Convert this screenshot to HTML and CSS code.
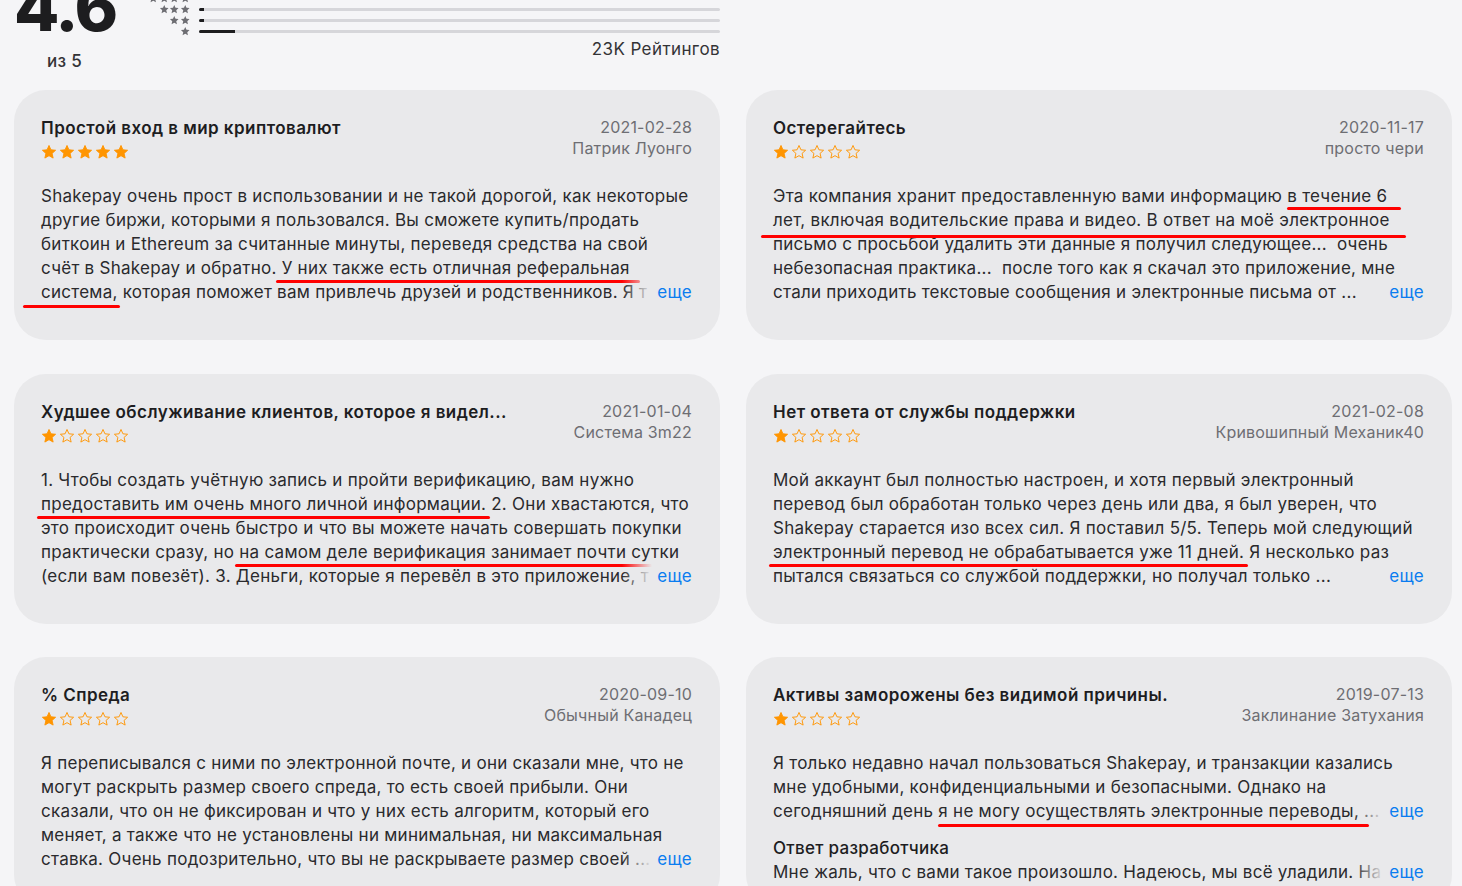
FILE: index.html
```html
<!DOCTYPE html>
<html lang="ru">
<head>
    <meta charset="UTF-8">
    <title>Оценки и отзывы</title>
    <link rel="stylesheet" href="styles.css">
</head>
<body>
    <svg class="defs" width="0" height="0">
        <symbol id="star" viewBox="0 0 24 24">
            <polygon points="12,2.2 14.9,8.7 21.9,9.4 16.6,14.1 18.2,21.1 12,17.5 5.8,21.1 7.4,14.1 2.1,9.4 9.1,8.7"/>
        </symbol>
    </svg>

    <div class="page">
        <!-- сводка оценок -->
        <div class="summary">
            <div class="score">
                <div class="score-value">4.6</div>
                <div class="score-max">из 5</div>
            </div>
            <div class="hist">
                <div class="hist-row">
                    <span class="hist-stars"><svg><use href="#star"/></svg><svg><use href="#star"/></svg><svg><use href="#star"/></svg><svg><use href="#star"/></svg><svg><use href="#star"/></svg></span>
                    <span class="bar"><span class="fill" style="width:87%"></span></span>
                </div>
                <div class="hist-row">
                    <span class="hist-stars"><svg><use href="#star"/></svg><svg><use href="#star"/></svg><svg><use href="#star"/></svg><svg><use href="#star"/></svg></span>
                    <span class="bar"><span class="fill" style="width:4%"></span></span>
                </div>
                <div class="hist-row">
                    <span class="hist-stars"><svg><use href="#star"/></svg><svg><use href="#star"/></svg><svg><use href="#star"/></svg></span>
                    <span class="bar"><span class="fill" style="width:1%"></span></span>
                </div>
                <div class="hist-row">
                    <span class="hist-stars"><svg><use href="#star"/></svg><svg><use href="#star"/></svg></span>
                    <span class="bar"><span class="fill" style="width:1%"></span></span>
                </div>
                <div class="hist-row">
                    <span class="hist-stars"><svg><use href="#star"/></svg></span>
                    <span class="bar"><span class="fill" style="width:7%"></span></span>
                </div>
                <div class="hist-count">23K Рейтингов</div>
            </div>
        </div>

        <!-- отзывы -->
        <div class="reviews">
            <div class="review">
                <div class="review-head">
                    <div>
                        <h3 class="review-title">Простой вход в мир криптовалют</h3>
                        <div class="stars">
                            <svg class="star on"><use href="#star"/></svg><svg class="star on"><use href="#star"/></svg><svg class="star on"><use href="#star"/></svg><svg class="star on"><use href="#star"/></svg><svg class="star on"><use href="#star"/></svg>
                        </div>
                    </div>
                    <div class="review-meta">
                        <div>2021-02-28</div>
                        <div>Патрик Луонго</div>
                    </div>
                </div>
                <div class="review-body">
                    <div class="line">Shakepay очень прост в использовании и не такой дорогой, как некоторые</div>
                    <div class="line">другие биржи, которыми я пользовался. Вы сможете купить/продать</div>
                    <div class="line">биткоин и Ethereum за считанные минуты, переведя средства на свой</div>
                    <div class="line">счёт в Shakepay и обратно. <span class="mark m-ref">У них также есть отличная реферальная</span></div>
                    <div class="line last"><span class="mark m-sys">система,</span> которая поможет вам привлечь друзей и родственников. Я т</div>
                    <a class="more" href="#">еще</a>
                </div>
            </div>

            <div class="review">
                <div class="review-head">
                    <div>
                        <h3 class="review-title">Остерегайтесь</h3>
                        <div class="stars">
                            <svg class="star on"><use href="#star"/></svg><svg class="star"><use href="#star"/></svg><svg class="star"><use href="#star"/></svg><svg class="star"><use href="#star"/></svg><svg class="star"><use href="#star"/></svg>
                        </div>
                    </div>
                    <div class="review-meta">
                        <div>2020-11-17</div>
                        <div>просто чери</div>
                    </div>
                </div>
                <div class="review-body">
                    <div class="line">Эта компания хранит предоставленную вами информацию <span class="mark m-six">в течение 6</span></div>
                    <div class="line"><span class="mark m-full">лет, включая водительские права и видео. В ответ на моё электронное</span></div>
                    <div class="line">письмо с просьбой удалить эти данные я получил следующее...&nbsp; очень</div>
                    <div class="line">небезопасная практика...&nbsp; после того как я скачал это приложение, мне</div>
                    <div class="line last">стали приходить текстовые сообщения и электронные письма от ...</div>
                    <a class="more" href="#">еще</a>
                </div>
            </div>

            <div class="review">
                <div class="review-head">
                    <div>
                        <h3 class="review-title">Худшее обслуживание клиентов, которое я видел...</h3>
                        <div class="stars">
                            <svg class="star on"><use href="#star"/></svg><svg class="star"><use href="#star"/></svg><svg class="star"><use href="#star"/></svg><svg class="star"><use href="#star"/></svg><svg class="star"><use href="#star"/></svg>
                        </div>
                    </div>
                    <div class="review-meta">
                        <div>2021-01-04</div>
                        <div>Система 3m22</div>
                    </div>
                </div>
                <div class="review-body">
                    <div class="line">1. Чтобы создать учётную запись и пройти верификацию, вам нужно</div>
                    <div class="line"><span class="mark">предоставить им очень много личной информации.</span> 2. Они хвастаются, что</div>
                    <div class="line">это происходит очень быстро и что вы можете начать совершать покупки</div>
                    <div class="line">практически сразу, но <span class="mark">на самом деле верификация занимает почти сутки</span></div>
                    <div class="line last">(если вам повезёт). 3. Деньги, которые я перевёл в это приложение, т</div>
                    <a class="more" href="#">еще</a>
                </div>
            </div>

            <div class="review">
                <div class="review-head">
                    <div>
                        <h3 class="review-title">Нет ответа от службы поддержки</h3>
                        <div class="stars">
                            <svg class="star on"><use href="#star"/></svg><svg class="star"><use href="#star"/></svg><svg class="star"><use href="#star"/></svg><svg class="star"><use href="#star"/></svg><svg class="star"><use href="#star"/></svg>
                        </div>
                    </div>
                    <div class="review-meta">
                        <div>2021-02-08</div>
                        <div>Кривошипный Механик40</div>
                    </div>
                </div>
                <div class="review-body">
                    <div class="line">Мой аккаунт был полностью настроен, и хотя первый электронный</div>
                    <div class="line">перевод был обработан только через день или два, я был уверен, что</div>
                    <div class="line">Shakepay старается изо всех сил. Я поставил 5/5. Теперь мой следующий</div>
                    <div class="line"><span class="mark">электронный перевод не обрабатывается уже 11 дней.</span> Я несколько раз</div>
                    <div class="line last">пытался связаться со службой поддержки, но получал только ...</div>
                    <a class="more" href="#">еще</a>
                </div>
            </div>

            <div class="review">
                <div class="review-head">
                    <div>
                        <h3 class="review-title">% Спреда</h3>
                        <div class="stars">
                            <svg class="star on"><use href="#star"/></svg><svg class="star"><use href="#star"/></svg><svg class="star"><use href="#star"/></svg><svg class="star"><use href="#star"/></svg><svg class="star"><use href="#star"/></svg>
                        </div>
                    </div>
                    <div class="review-meta">
                        <div>2020-09-10</div>
                        <div>Обычный Канадец</div>
                    </div>
                </div>
                <div class="review-body">
                    <div class="line">Я переписывался с ними по электронной почте, и они сказали мне, что не</div>
                    <div class="line">могут раскрыть размер своего спреда, то есть своей прибыли. Они</div>
                    <div class="line">сказали, что он не фиксирован и что у них есть алгоритм, который его</div>
                    <div class="line">меняет, а также что не установлены ни минимальная, ни максимальная</div>
                    <div class="line last">ставка. Очень подозрительно, что вы не раскрываете размер своей ...</div>
                    <a class="more" href="#">еще</a>
                </div>
            </div>

            <div class="review">
                <div class="review-head">
                    <div>
                        <h3 class="review-title">Активы заморожены без видимой причины.</h3>
                        <div class="stars">
                            <svg class="star on"><use href="#star"/></svg><svg class="star"><use href="#star"/></svg><svg class="star"><use href="#star"/></svg><svg class="star"><use href="#star"/></svg><svg class="star"><use href="#star"/></svg>
                        </div>
                    </div>
                    <div class="review-meta">
                        <div>2019-07-13</div>
                        <div>Заклинание Затухания</div>
                    </div>
                </div>
                <div class="review-body">
                    <div class="line">Я только недавно начал пользоваться Shakepay, и транзакции казались</div>
                    <div class="line">мне удобными, конфиденциальными и безопасными. Однако на</div>
                    <div class="line last">сегодняшний день <span class="mark m-end">я не могу осуществлять электронные переводы,</span> ...</div>
                    <a class="more" href="#">еще</a>
                </div>
                <div class="dev-reply">
                    <div class="dev-title">Ответ разработчика</div>
                    <div class="review-body">
                        <div class="line last">Мне жаль, что с вами такое произошло. Надеюсь, мы всё уладили. На</div>
                        <a class="more" href="#">еще</a>
                    </div>
                </div>
            </div>
        </div>
    </div>
</body>
</html>
```

FILE: styles.css
```css
body {
    margin: 0;
    background-color: #f5f5f7;
    font-family: Inter, "Noto Sans", sans-serif;
    color: #1d1d1f;
    overflow: hidden;
}
.defs {
    position: absolute;
    width: 0;
    height: 0;
}
.page {
    padding: 0 10px 0 14px;
    margin-top: -18px;
}

/* сводка */
.summary {
    display: flex;
    width: 706px;
    height: 108px;
}
.score {
    width: 101px;
    text-align: center;
}
.score-value {
    font-size: 66px;
    font-weight: 800;
    line-height: 50px;
    letter-spacing: -2px;
    color: #1d1d1f;
}
.score-max {
    margin-top: 18px;
    font-size: 17px;
    font-weight: 500;
    line-height: 22px;
    letter-spacing: 0.3px;
    color: #333336;
}
.hist {
    flex: 1;
    margin-left: 27px;
}
.hist-row {
    display: flex;
    align-items: center;
    height: 11px;
}
.hist-stars {
    display: flex;
    justify-content: flex-end;
    width: 48px;
    fill: #6e6e73;
}
.hist-stars svg {
    width: 10.5px;
    height: 10.5px;
}
.bar {
    flex: 1;
    height: 3px;
    margin-left: 9px;
    background-color: #d6d6da;
    border-radius: 2px;
    overflow: hidden;
}
.fill {
    display: block;
    height: 100%;
    background-color: #1d1d1f;
}
.hist-count {
    margin-top: 1px;
    text-align: right;
    font-size: 17px;
    line-height: 22px;
    letter-spacing: 0.4px;
    color: #333336;
}

/* отзывы */
.reviews {
    display: grid;
    grid-template-columns: 706px 706px;
    column-gap: 26px;
    row-gap: 33.5px;
}
.review {
    height: 250px;
    box-sizing: border-box;
    padding: 27px 28px 0 27px;
    background-color: #e9e9eb;
    border-radius: 32px;
    overflow: hidden;
}
.review-head {
    display: flex;
    justify-content: space-between;
}
.review-title {
    margin: 0;
    font-size: 17px;
    font-weight: 600;
    line-height: 22px;
    letter-spacing: 0.45px;
    color: #1d1d1f;
}
.stars {
    display: flex;
    gap: 2px;
    margin-top: 5px;
}
.star {
    width: 16px;
    height: 16px;
    fill: none;
    stroke: #ff9500;
    stroke-width: 1.4;
    stroke-linejoin: round;
}
.star.on {
    fill: #ff9500;
}
.review-meta {
    text-align: right;
    font-size: 16px;
    line-height: 21px;
    letter-spacing: 0.2px;
    color: #6e6e73;
}
.review-body {
    position: relative;
    margin-top: 24px;
    font-size: 17px;
    line-height: 24px;
    letter-spacing: 0.26px;
    color: #2a2a2d;
}
.line {
    white-space: nowrap;
}
.line.last {
    padding-right: 45px;
}
.more {
    position: absolute;
    right: 0;
    bottom: 0;
    padding-left: 35px;
    color: #0a7cf0;
    text-decoration: none;
    background: linear-gradient(to right, rgba(233, 233, 235, 0), #e9e9eb 30px);
}

/* красные подчёркивания */
.mark {
    position: relative;
}
.mark::after {
    content: "";
    position: absolute;
    left: -4px;
    right: -4px;
    bottom: -5px;
    height: 3px;
    background-color: #ff0000;
    border-radius: 2px;
}
.mark.m-ref::after {
    left: -6px;
    right: -10px;
}
.mark.m-sys::after {
    left: -18px;
    right: -2px;
    bottom: -6px;
}
.mark.m-six::after {
    left: 0;
    right: -14px;
    bottom: -4px;
}
.mark.m-full::after {
    left: -12px;
    right: -16px;
    bottom: -8px;
}
.mark.m-end::after {
    left: 0;
    right: -10px;
    bottom: -6px;
}

.dev-reply {
    margin-top: 13px;
}
.dev-title {
    font-size: 17px;
    font-weight: 500;
    line-height: 24px;
    letter-spacing: 0.3px;
    color: #1d1d1f;
}
.dev-reply .review-body {
    margin-top: 0;
}
```
